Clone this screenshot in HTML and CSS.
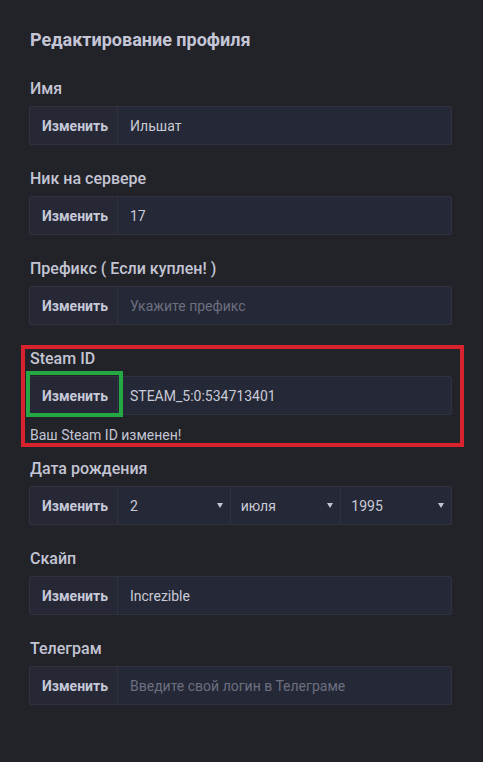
FILE: index.html
```html
<html>

<head>
  <meta charset="utf-8">
  <link rel="stylesheet" href="styles.css">
</head>

<body>
  <div class="profile">
    <h2 class="title">Редактирование профиля</h2>

    <!-- Имя -->
    <div class="field">
      <div class="label">Имя</div>
      <div class="group">
        <button class="change">Изменить</button>
        <input class="value" type="text" value="Ильшат">
      </div>
    </div>

    <!-- Ник -->
    <div class="field">
      <div class="label">Ник на сервере</div>
      <div class="group">
        <button class="change">Изменить</button>
        <input class="value" type="text" value="17">
      </div>
    </div>

    <!-- Префикс -->
    <div class="field">
      <div class="label">Префикс ( Если куплен! )</div>
      <div class="group">
        <button class="change">Изменить</button>
        <input class="value" type="text" placeholder="Укажите префикс">
      </div>
    </div>

    <!-- Steam ID, обведён красным -->
    <div class="field marked">
      <div class="label">Steam ID</div>
      <div class="group">
        <button class="change pressed">Изменить</button>
        <input class="value" type="text" value="STEAM_5:0:534713401">
      </div>
      <div class="notice">Ваш Steam ID изменен!</div>
    </div>

    <!-- Дата рождения -->
    <div class="field">
      <div class="label">Дата рождения</div>
      <div class="group">
        <button class="change">Изменить</button>
        <div class="pick first"><span>2</span><span class="arrow"></span></div>
        <div class="pick"><span>июля</span><span class="arrow"></span></div>
        <div class="pick"><span>1995</span><span class="arrow"></span></div>
      </div>
    </div>

    <!-- Скайп -->
    <div class="field">
      <div class="label">Скайп</div>
      <div class="group">
        <button class="change">Изменить</button>
        <input class="value" type="text" value="Increzible">
      </div>
    </div>

    <!-- Телеграм -->
    <div class="field">
      <div class="label">Телеграм</div>
      <div class="group">
        <button class="change">Изменить</button>
        <input class="value" type="text" placeholder="Введите свой логин в Телеграме">
      </div>
    </div>
  </div>
</body>

</html>
```

FILE: styles.css
```css
body {
  margin: 0;
  background-color: #222229;
  font-family: Roboto, "Liberation Sans", Arial, sans-serif;
  color: #c3c5d3;
}

.profile {
  padding: 28px 31px 0 29px;
}

.title {
  margin: 0 0 27px 1px;
  font-size: 18px;
  line-height: 24px;
  font-weight: 700;
  color: #c4c6d6;
}

.field {
  margin-bottom: 24px;
}

.label {
  margin: 0 0 7px 1px;
  font-size: 16px;
  line-height: 20px;
  font-weight: 500;
  color: #c3c5d3;
}

.group {
  display: flex;
  height: 39px;
  box-sizing: border-box;
  border: 1px solid #30333f;
  border-radius: 2px;
  background-color: #252836;
}

.change {
  width: 88px;
  flex: none;
  border: none;
  border-right: 1px solid #30333f;
  background-color: #262836;
  color: #c7c9d8;
  font-family: inherit;
  font-size: 14px;
  font-weight: 700;
  padding: 0 0 0 3px;
  cursor: pointer;
}

.value {
  flex: 1;
  min-width: 0;
  border: none;
  outline: none;
  background: transparent;
  padding: 0 12px;
  font-family: inherit;
  font-size: 14px;
  color: #c9cbd7;
}

.value::placeholder {
  color: #6c6f80;
}

.pick {
  flex: 1;
  display: flex;
  align-items: center;
  justify-content: space-between;
  padding: 0 7px 0 10px;
  font-size: 14px;
  color: #c9cbd7;
  border-right: 1px solid #30333f;
}

.pick.first {
  padding-left: 12px;
}

.pick:last-child {
  border-right: none;
}

.arrow {
  width: 0;
  height: 0;
  border-left: 3px solid transparent;
  border-right: 3px solid transparent;
  border-top: 5px solid #c3c5d3;
}

.notice {
  margin: 10px 0 0 1px;
  font-size: 14px;
  line-height: 20px;
  color: #c3c5d3;
}

.marked {
  position: relative;
  margin-bottom: 14px;
}

/* red frame drawn over the Steam ID block */
.marked::after {
  content: "";
  position: absolute;
  top: -4px;
  left: -8px;
  right: -12px;
  bottom: -2px;
  border: 4px solid #d8222d;
  pointer-events: none;
}

.pressed {
  position: relative;
}

/* green frame over the pressed button */
.pressed::after {
  content: "";
  position: absolute;
  top: -6px;
  left: -4px;
  right: -6px;
  bottom: -3px;
  border: 4px solid #23a844;
  pointer-events: none;
}
```
